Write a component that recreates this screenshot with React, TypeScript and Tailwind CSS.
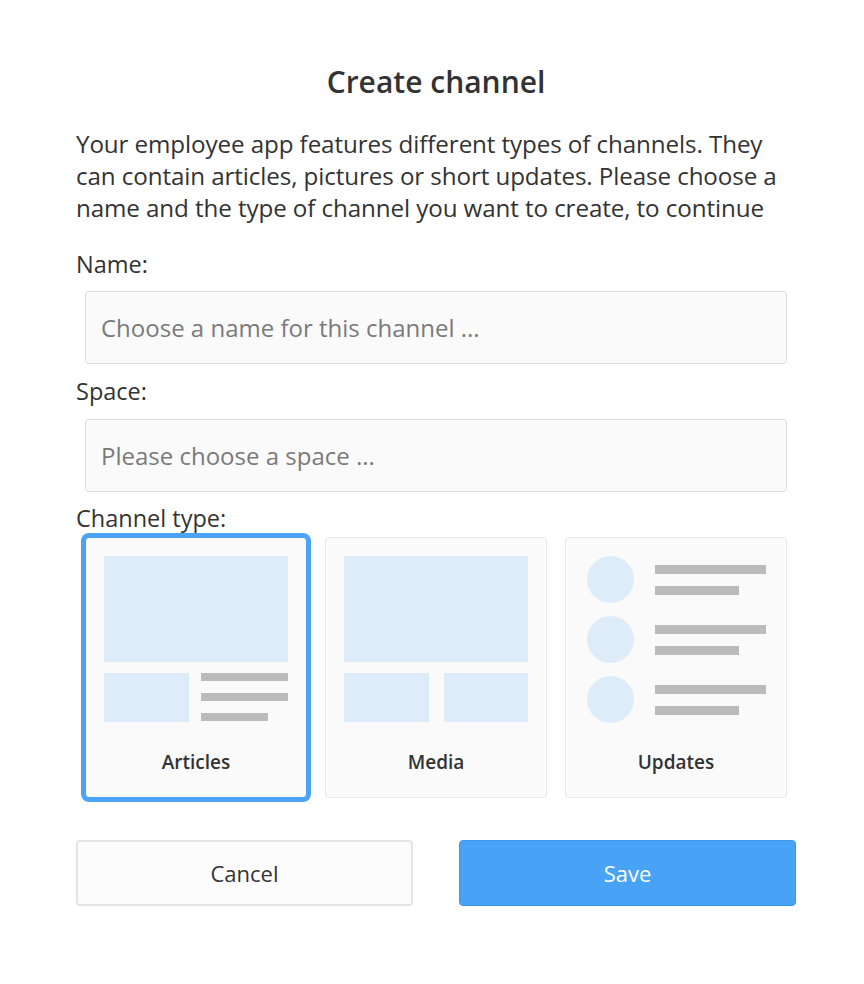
import React from "react";

const LB = "bg-[#deecf9]";
const GR = "bg-[#bbbbbb]";

function Card({ label, selected, children }: { label: string; selected?: boolean; children: React.ReactNode }) {
  return (
    <div
      className={
        "flex h-[261px] flex-col rounded-[4px] border bg-[#fafafa] px-[18px] pt-[18px] " +
        (selected ? "border-[#4aa3f7] shadow-[0_0_0_4px_#4aa3f7]" : "border-[#e8e8e8]")
      }
    >
      <div className="h-[167px]">{children}</div>
      <div className="mt-[26px] text-center text-[19px] font-semibold leading-[26px] text-[#333]">{label}</div>
    </div>
  );
}

export default function App() {
  return (
    <div className="min-h-[984px] bg-white" style={{ fontFamily: '"Open Sans", "Noto Sans", sans-serif' }}>
      <div className="mx-auto flex w-[720px] translate-x-[4px] flex-col pt-[61px] text-[#333]">
        <h1 className="text-center text-[30px] font-semibold leading-[42px] text-[#333]">Create channel</h1>
        <p className="mt-[25px] text-[24.2px] leading-[32px] tracking-[-0.1px]">
          Your employee app features different types of channels. They can contain articles, pictures or short updates. Please choose a name and the type of channel you want to create, to continue
        </p>
        <label className="mt-[25px] text-[23.5px] leading-[30px]">Name:</label>
        <div className="mx-[9px] mt-[12px] flex h-[73px] items-center rounded-[4px] border border-[#dddddd] bg-[#fafafa] px-[15px] text-[24px] text-[#7a7a7a]">
          Choose a name for this channel ...
        </div>
        <label className="mt-[12px] text-[23.5px] leading-[30px]">Space:</label>
        <div className="mx-[9px] mt-[13px] flex h-[73px] items-center rounded-[4px] border border-[#dddddd] bg-[#fafafa] px-[15px] text-[24px] text-[#7a7a7a]">
          Please choose a space ...
        </div>
        <label className="mt-[11px] text-[23.5px] leading-[30px]">Channel type:</label>
        <div className="mx-[9px] mt-[4px] grid grid-cols-3 gap-[18px]">
          <Card label="Articles" selected>
            <div className={"h-[106px] w-full " + LB} />
            <div className="mt-[11px] flex gap-[12px]">
              <div className={"h-[49px] w-[85px] " + LB} />
              <div className="flex flex-1 flex-col gap-[12px] pt-0">
                <div className={"h-[8px] w-full " + GR} />
                <div className={"h-[8px] w-full " + GR} />
                <div className={"h-[8px] w-[67px] " + GR} />
              </div>
            </div>
          </Card>
          <Card label="Media">
            <div className={"h-[106px] w-full " + LB} />
            <div className="mt-[11px] flex gap-[15px]">
              <div className={"h-[49px] flex-1 " + LB} />
              <div className={"h-[49px] flex-1 " + LB} />
            </div>
          </Card>
          <Card label="Updates">
            <div className="flex flex-col gap-[13px] pl-[3px]">
              {[0, 1, 2].map((i) => (
                <div key={i} className="flex items-start gap-[21px]">
                  <div className={"h-[47px] w-[47px] rounded-full " + LB} />
                  <div className="flex flex-col gap-[12px] pt-[9px]">
                    <div className={"h-[9px] w-[111px] " + GR} />
                    <div className={"h-[9px] w-[84px] " + GR} />
                  </div>
                </div>
              ))}
            </div>
          </Card>
        </div>
        <div className="mt-[42px] flex justify-between">
          <button className="h-[66px] w-[337px] rounded-[4px] border-2 border-[#e4e4e4] bg-[#fcfcfc] text-[22px] text-[#333]">
            Cancel
          </button>
          <button className="h-[66px] w-[337px] rounded-[4px] border border-[#3d97ea] bg-[#48a3f6] text-[22px] text-white">
            Save
          </button>
        </div>
      </div>
    </div>
  );
}
